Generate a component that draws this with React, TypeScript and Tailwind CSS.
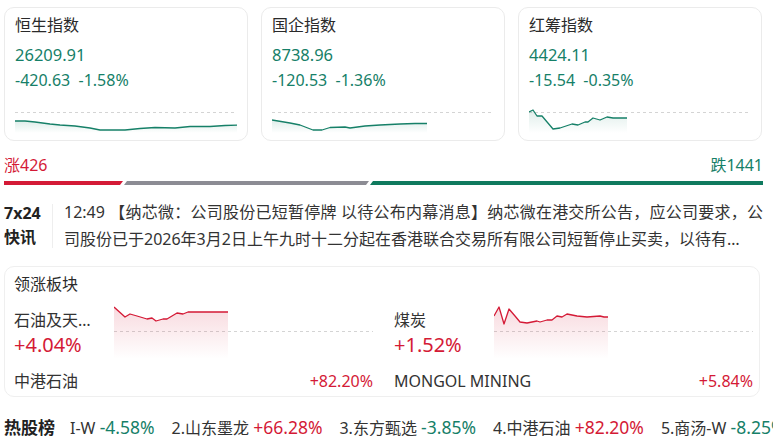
import React from "react";

type Pt = [number, number];

const toLine = (pts: Pt[]) => pts.map((p, i) => `${i ? "L" : "M"}${p[0]},${p[1]}`).join(" ");
const toArea = (pts: Pt[], h: number) =>
  `${toLine(pts)} L${pts[pts.length - 1][0]},${h} L${pts[0][0]},${h} Z`;

function Spark({
  pts,
  h,
  dashY,
  color,
  id,
  op,
}: {
  pts: Pt[];
  h: number;
  dashY: number;
  color: string;
  id: string;
  op: number;
}) {
  return (
    <svg width="100%" height={h} className="block">
      <defs>
        <linearGradient id={id} x1="0" y1="0" x2="0" y2="1">
          <stop offset="0%" stopColor={color} stopOpacity={op} />
          <stop offset="100%" stopColor={color} stopOpacity={0} />
        </linearGradient>
      </defs>
      <line x1="0" x2="100%" y1={dashY + 0.5} y2={dashY + 0.5} stroke="#d4d4d4" strokeWidth="1" strokeDasharray="3 3" />
      <path d={toArea(pts, h)} fill={`url(#${id})`} />
      <path d={toLine(pts)} fill="none" stroke={color} strokeWidth="1.3" strokeLinejoin="round" />
    </svg>
  );
}

const GREEN = "#168068";
const RED = "#d41a36";

const cards: { name: string; val: string; chg: string; pts: Pt[] }[] = [
  {
    name: "恒生指数",
    val: "26209.91",
    chg: "-420.63  -1.58%",
    pts: [[0, 12], [10, 12], [20, 13], [35, 15], [45, 16], [60, 17], [75, 19], [85, 21], [100, 21], [110, 21], [125, 19.5], [140, 18.5], [160, 19], [175, 17.5], [195, 17.5], [210, 16.5], [223, 16]],
  },
  {
    name: "国企指数",
    val: "8738.96",
    chg: "-120.53  -1.36%",
    pts: [[0, 11], [18, 14], [28, 16], [41, 21], [50, 21], [58, 18.5], [73, 18], [78, 19], [93, 17], [108, 16], [128, 15], [143, 14.5], [155, 14.5]],
  },
  {
    name: "红筹指数",
    val: "4424.11",
    chg: "-15.54  -0.35%",
    pts: [[0, 3], [4, 1], [8, 7], [13, 7], [24, 20], [31, 19], [43, 15], [49, 16], [56, 13], [59, 13], [64, 9], [71, 11], [78, 8], [84, 9], [98, 9]],
  },
];

const sectors: { name: string; pct: string; stock: string; spct: string; pts: Pt[] }[] = [
  {
    name: "石油及天然气",
    pct: "+4.04%",
    stock: "中港石油",
    spct: "+82.20%",
    pts: [[0, 3], [11, 13], [16, 10], [23, 12], [33, 15], [38, 14], [42, 17], [49, 15], [53, 15], [63, 9], [69, 10], [74, 8], [79, 8], [89, 8], [114, 8]],
  },
  {
    name: "煤炭",
    pct: "+1.52%",
    stock: "MONGOL MINING",
    spct: "+5.84%",
    pts: [[0, 12], [5, 3], [10, 20], [15, 5], [21, 12], [26, 18], [33, 19], [38, 18], [43, 17], [46, 18], [53, 16], [58, 16], [63, 12], [68, 13], [73, 10], [83, 12], [93, 13], [106, 12], [110, 13], [114, 13]],
  },
];

const hot: { n: string; p: string; up: boolean }[] = [
  { n: "I-W", p: "-4.58%", up: false },
  { n: "2.山东墨龙", p: "+66.28%", up: true },
  { n: "3.东方甄选", p: "-3.85%", up: false },
  { n: "4.中港石油", p: "+82.20%", up: true },
  { n: "5.商汤-W", p: "-8.25%", up: false },
];

export default function App() {
  return (
    <div
      className="w-[773px] h-[436px] overflow-hidden bg-white pl-[4px] pr-[10px] pt-[7px] text-[#333]"
      style={{ fontFamily: '"Noto Sans", "Noto Sans CJK SC", sans-serif' }}
    >
      {/* index cards */}
      <div className="grid grid-cols-[244px_244px_244px] gap-[13px]">
        {cards.map((c, i) => (
          <div key={c.name} className="h-[134px] rounded-[10px] border border-[#ebebeb] px-[10px] pt-[6px] flex flex-col">
            <div className="text-[16px] leading-[22px] text-[#2a2a2a]">{c.name}</div>
            <div className="mt-[9px] text-[16.5px] leading-[20px] text-[#168068]">{c.val}</div>
            <div className="mt-[5px] text-[16px] leading-[20px] text-[#168068] whitespace-pre">{c.chg}</div>
            <div className="mt-[19px]">
              <Spark pts={c.pts} h={24} dashY={3} color={GREEN} id={`g${i}`} op={0.14} />
            </div>
          </div>
        ))}
      </div>

      {/* up/down counts */}
      <div className="mt-[13px] flex justify-between text-[16px] leading-[22px]">
        <span className="text-[#d41a36]">涨426</span>
        <span className="text-[#168068]">跌1441</span>
      </div>
      <div className="mt-[5px] flex h-[4px] w-[759px]">
        <div className="w-[119px] bg-[#d41a36] [clip-path:polygon(0_0,100%_0,calc(100%-3px)_100%,0_100%)]" />
        <div className="ml-[1px] w-[245px] bg-[#8c8c94] [clip-path:polygon(3px_0,100%_0,calc(100%-3px)_100%,0_100%)]" />
        <div className="ml-[1px] flex-1 bg-[#0f7a5e] [clip-path:polygon(3px_0,100%_0,100%_100%,0_100%)]" />
      </div>

      {/* news */}
      <div className="mt-[14px] flex">
        <div className="w-[48px] shrink-0 pt-[2px] font-bold text-[16px] leading-[24px] text-[#222]">
          <div>7x24</div>
          <div>快讯</div>
        </div>
        <div className="mt-[5px] h-[44px] w-px bg-[#eeeeee]" />
        <div className="ml-[11px] min-w-0 flex-1 text-[16px] leading-[27px] text-[#333]">
          <div className="text-justify [text-align-last:justify] whitespace-nowrap overflow-hidden">
            12:49 【纳芯微：公司股份已短暂停牌 以待公布内幕消息】纳芯微在港交所公告，应公司要求，公
          </div>
          <div className="truncate pr-[8px]">
            司股份已于2026年3月2日上午九时十二分起在香港联合交易所有限公司短暂停止买卖，以待有关内幕消息的公布。
          </div>
        </div>
      </div>

      {/* sectors */}
      <div className="mt-[13px] mr-[3px] h-[131px] rounded-[10px] border border-[#efefef] pl-[9px] pr-[6px] pt-[6px]">
        <div className="text-[16px] leading-[22px] text-[#2a2a2a]">领涨板块</div>
        <div className="mt-[9px] grid grid-cols-2 gap-[21px]">
          {sectors.map((s, i) => (
            <div key={s.name}>
              <div className="flex h-[55px]">
                <div className="w-[100px] shrink-0 pt-[5px]">
                  <div className="w-[84px] truncate text-[16px] leading-[22px] text-[#333]">{s.name}</div>
                  <div className="mt-[1px] text-[20px] leading-[25px] text-[#d41a36]">{s.pct}</div>
                </div>
                <div className="flex-1">
                  <Spark pts={s.pts} h={55} dashY={27} color={RED} id={`r${i}`} op={0.16} />
                </div>
              </div>
              <div className="mt-[11px] flex justify-between text-[16px] leading-[22px]">
                <span className="text-[#333]">{s.stock}</span>
                <span className="text-[#d41a36]">{s.spct}</span>
              </div>
            </div>
          ))}
        </div>
      </div>

      {/* hot stocks */}
      <div className="mt-[19px] -mr-[10px] flex items-center whitespace-nowrap">
        <span className="shrink-0 font-bold text-[17px] leading-[22px] text-[#222]">热股榜</span>
        <div className="ml-[15px] flex gap-[17px] overflow-hidden text-[16px] leading-[22px]">
          {hot.map((h) => (
            <span key={h.n} className="shrink-0">
              <span className="text-[#333]">{h.n} </span>
              {h.up ? (
                <span className="text-[17.5px] text-[#d41a36]">{h.p}</span>
              ) : (
                <span className="text-[17.5px] text-[#168068]">{h.p}</span>
              )}
            </span>
          ))}
        </div>
      </div>
    </div>
  );
}
